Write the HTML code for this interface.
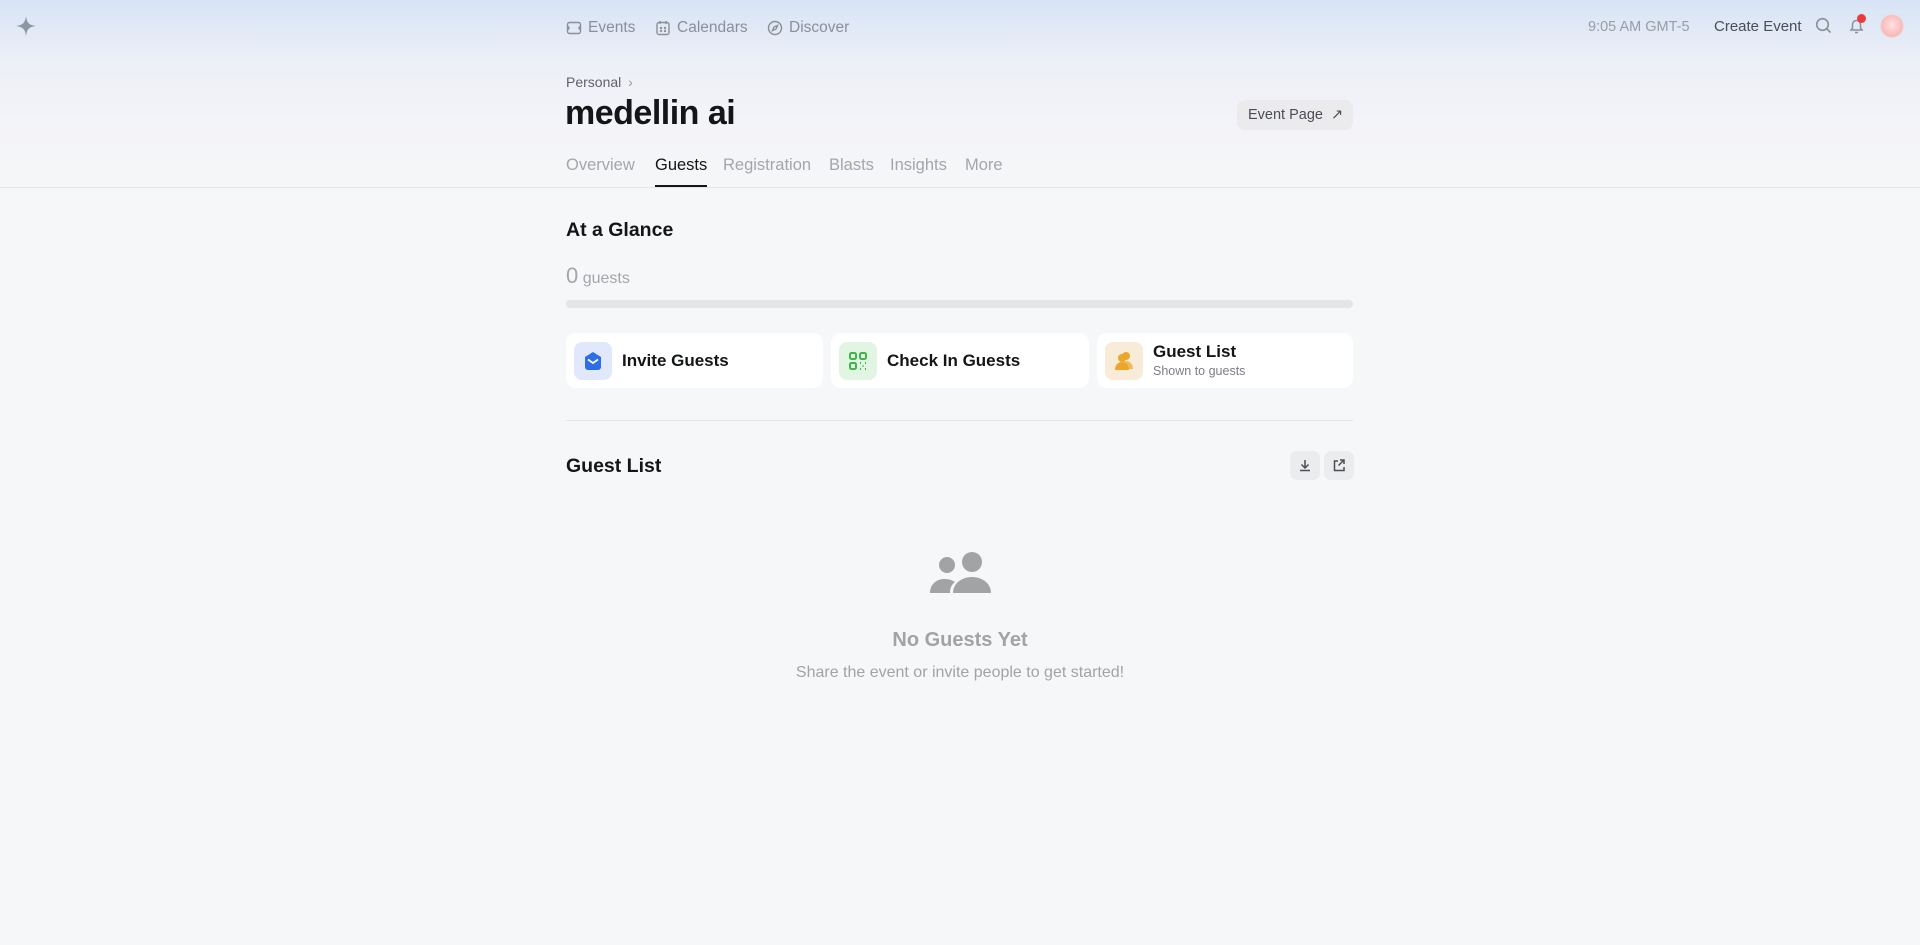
<!DOCTYPE html>
<html><head><meta charset="utf-8"><style>
*{box-sizing:border-box;margin:0;padding:0}
body{width:1920px;height:945px;overflow:hidden;font-family:"Liberation Sans",sans-serif;background:#f6f7f9;color:#131517;position:relative}
.bg{position:absolute;left:0;top:0;width:1920px;height:190px;background:linear-gradient(180deg,#d7e4f6 0%,#eef0f7 35%,#f4f4f8 70%,#f6f7f9 100%)}
.abs{position:absolute}
.nav{top:19px;font-size:15.5px;color:#8c9096;display:flex;align-items:center;gap:6px}
.tab{position:absolute;top:156px;font-size:16.5px;color:#a3a6aa}
.card{position:absolute;top:333px;height:55px;background:#fff;border-radius:10px}
.ic{position:absolute;left:8px;top:9px;width:38px;height:38px;border-radius:8px}
.ctitle{position:absolute;left:56px;font-size:17px;font-weight:600;color:#131517}
.sbtn{position:absolute;top:451px;width:30px;height:29px;background:#ebecee;border-radius:7px}
</style></head><body>
<div class="bg"></div>
<svg class="abs" style="left:16px;top:16px" width="20" height="20" viewBox="0 0 20 20"><path d="M10 0 C11 7 13 9 20 10 C13 11 11 13 10 20 C9 13 7 11 0 10 C7 9 9 7 10 0Z" fill="#8d96a3"/></svg>

<div class="abs nav" style="left:566px"><svg width="16" height="16" viewBox="0 0 16 16" fill="none" stroke="#8c9096" stroke-width="1.4"><rect x="1.5" y="2.5" width="13" height="11" rx="2"/><path d="M1.5 6.5a1.5 1.5 0 0 1 0 3M14.5 6.5a1.5 1.5 0 0 0 0 3"/></svg>Events</div>
<div class="abs nav" style="left:655px"><svg width="16" height="16" viewBox="0 0 16 16" fill="none" stroke="#8c9096" stroke-width="1.4"><rect x="2" y="2.5" width="12" height="12" rx="2"/><path d="M5 1v3M11 1v3"/><circle cx="6" cy="8" r=".5"/><circle cx="10" cy="8" r=".5"/><circle cx="6" cy="11" r=".5"/><circle cx="10" cy="11" r=".5"/></svg>Calendars</div>
<div class="abs nav" style="left:767px"><svg width="16" height="16" viewBox="0 0 16 16" fill="none" stroke="#8c9096" stroke-width="1.4"><circle cx="8" cy="8" r="6.5"/><path d="M10.5 5.5 9 9 5.5 10.5 7 7Z"/></svg>Discover</div>

<div class="abs" style="left:1588px;top:19px;font-size:14.5px;color:#9a9da2">9:05 AM GMT-5</div>
<div class="abs" style="left:1714px;top:18px;font-size:15px;color:#4a4e55">Create Event</div>
<svg class="abs" style="left:1815px;top:17px" width="17" height="17" viewBox="0 0 17 17" fill="none" stroke="#8c9096" stroke-width="1.6"><circle cx="7.5" cy="7.5" r="5.8"/><path d="M12 12l3.5 3.5"/></svg>
<svg class="abs" style="left:1848px;top:17px" width="17" height="18" viewBox="0 0 17 18" fill="none" stroke="#8c9096" stroke-width="1.5"><path d="M3 13h11l-1.5-2V7.5a4 4 0 0 0-8 0V11Z"/><path d="M7 15.5h3"/></svg>
<div class="abs" style="left:1857px;top:14px;width:9px;height:9px;border-radius:50%;background:#ea3a3a"></div>
<div class="abs" style="left:1880px;top:14px;width:24px;height:24px;border-radius:50%;background:radial-gradient(circle at 50% 45%,#ffe0e0,#f5a6a8);border:1px solid #e8dede"></div>

<div class="abs" style="left:566px;top:74px;font-size:14px;color:#5e6268">Personal <span style="color:#999;margin-left:3px">›</span></div>
<div class="abs" style="left:565px;top:94px;font-size:34px;font-weight:700;color:#131517;letter-spacing:-0.5px">medellin ai</div>
<div class="abs" style="left:1237px;top:100px;width:116px;height:30px;background:#ebebee;border-radius:8px;font-size:14.5px;color:#4a4e55;padding:7px 0 0 11px">Event Page <span style="margin-left:4px">↗</span></div>

<div class="tab" style="left:566px">Overview</div>
<div class="tab" style="left:655px;color:#131517">Guests</div>
<div class="tab" style="left:723px">Registration</div>
<div class="tab" style="left:829px">Blasts</div>
<div class="tab" style="left:890px">Insights</div>
<div class="tab" style="left:965px">More</div>
<div class="abs" style="left:655px;top:185px;width:52px;height:2px;background:#131517"></div>
<div class="abs" style="left:0;top:187px;width:1920px;height:1px;background:#e3e4e7"></div>

<div class="abs" style="left:566px;top:219px;font-size:19.5px;font-weight:700">At a Glance</div>
<div class="abs" style="left:566px;top:263px;color:#a3a6aa"><span style="font-size:22px">0</span> <span style="font-size:16px">guests</span></div>
<div class="abs" style="left:566px;top:300px;width:787px;height:8px;border-radius:4px;background:#e4e5e6"></div>

<div class="card" style="left:566px;width:257px"><div class="ic" style="background:#e1e8fb"><svg width="38" height="38" viewBox="0 0 38 38"><path d="M19 10 L27 15 V25 a3 3 0 0 1-3 3 H14 a3 3 0 0 1-3-3 V15Z" fill="#2d6ee8"/><path d="M14 17.5 L19 21 L24 17.5" stroke="#fff" stroke-width="1.8" fill="none"/></svg></div><div class="ctitle" style="top:18px">Invite Guests</div></div>
<div class="card" style="left:831px;width:258px"><div class="ic" style="background:#e1f5e2"><svg width="38" height="38" viewBox="0 0 38 38" fill="none" stroke="#3fb54a" stroke-width="2"><rect x="11" y="11" width="6" height="6" rx="1.5"/><rect x="21" y="11" width="6" height="6" rx="1.5"/><rect x="11" y="21" width="6" height="6" rx="1.5"/><path d="M21 21h1M26 21h1M23.5 24h1M21 27h1M26 27h1"/></svg></div><div class="ctitle" style="top:18px">Check In Guests</div></div>
<div class="card" style="left:1097px;width:256px"><div class="ic" style="background:#f8ecd8"><svg width="38" height="38" viewBox="0 0 38 38" fill="#eba72c"><circle cx="21" cy="14" r="4"/><path d="M14 27c0-5 3-8 7-8s7 3 7 8Z" opacity=".7"/><circle cx="17" cy="16" r="4"/><path d="M10 28c0-5 3-8 7-8s7 3 7 8Z"/></svg></div><div class="ctitle" style="top:9px">Guest List</div><div class="abs" style="left:56px;top:31px;font-size:12.5px;color:#7a7e84">Shown to guests</div></div>

<div class="abs" style="left:566px;top:420px;width:787px;height:1px;background:#e3e4e7"></div>
<div class="abs" style="left:566px;top:455px;font-size:19.5px;font-weight:700">Guest List</div>
<div class="sbtn" style="left:1290px"><svg width="30" height="29" viewBox="0 0 30 29" fill="none" stroke="#4a4e55" stroke-width="1.5"><path d="M15 9v8M11.5 13.5 15 17l3.5-3.5M10 19.5h10"/></svg></div>
<div class="sbtn" style="left:1324px"><svg width="30" height="29" viewBox="0 0 30 29" fill="none" stroke="#4a4e55" stroke-width="1.5"><path d="M14 10h-3.5v9.5H20V16M16 9h4v4M20 9l-5.5 5.5"/></svg></div>

<svg class="abs" style="left:929px;top:551px" width="63" height="44" viewBox="0 0 63 44" fill="#a2a3a5"><circle cx="18" cy="14" r="8"/><path d="M1 42c0-9 7-14 14-14 5 0 8 1 11 3-4 3-5 7-5 11Z"/><circle cx="43" cy="11" r="10"/><path d="M24 42c0-9 8-16 19-16s19 7 19 16Z"/></svg>
<div class="abs" style="left:0;width:1920px;text-align:center;top:629px;font-size:20px;color:#a2a3a5;font-weight:600">No Guests Yet</div>
<div class="abs" style="left:0;width:1920px;text-align:center;top:664px;font-size:16px;color:#a2a3a5">Share the event or invite people to get started!</div>
</body></html>
